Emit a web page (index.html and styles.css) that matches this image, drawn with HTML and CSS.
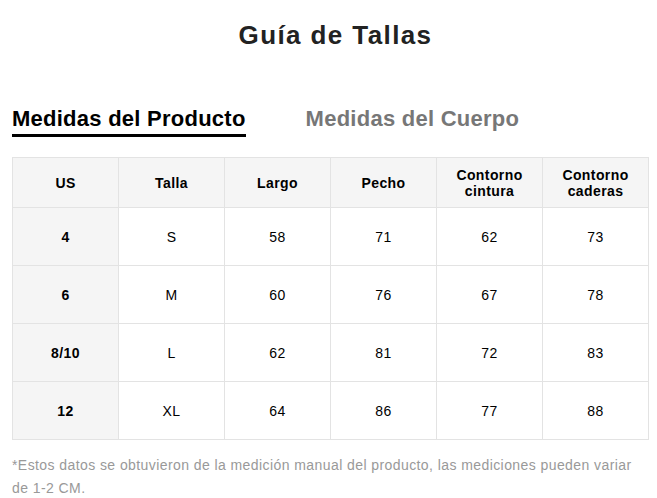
FILE: index.html
```html
<!DOCTYPE html>
<html lang="es">
<head>
<meta charset="utf-8">
<title>Guía de Tallas</title>
<link rel="stylesheet" href="styles.css">
</head>
<body>
<div class="page">
  <h1 class="title">Guía de Tallas</h1>
  <div class="tabs">
    <div class="tab active">Medidas del Producto</div>
    <div class="tab">Medidas del Cuerpo</div>
  </div>
  <table class="sizes">
    <thead>
      <tr>
        <th>US</th><th>Talla</th><th>Largo</th><th>Pecho</th><th>Contorno<br>cintura</th><th>Contorno<br>caderas</th>
      </tr>
    </thead>
    <tbody>
      <tr><th>4</th><td>S</td><td>58</td><td>71</td><td>62</td><td>73</td></tr>
      <tr><th>6</th><td>M</td><td>60</td><td>76</td><td>67</td><td>78</td></tr>
      <tr><th>8/10</th><td>L</td><td>62</td><td>81</td><td>72</td><td>83</td></tr>
      <tr><th>12</th><td>XL</td><td>64</td><td>86</td><td>77</td><td>88</td></tr>
    </tbody>
  </table>
  <p class="note">*Estos datos se obtuvieron de la medición manual del producto, las mediciones pueden variar de 1-2 CM.</p>
</div>
</body>
</html>
```
FILE: styles.css
```css
* { box-sizing: border-box; }
body {
  margin: 0;
  background: #fff;
  font-family: "Liberation Sans", Arial, sans-serif;
  color: #000;
}
.page {
  padding: 0 8px 0 12px;
}
.title {
  margin: 0;
  padding: 20px 0 0 10px;
  height: 62px;
  text-align: center;
  font-size: 26px;
  letter-spacing: 1.4px;
  font-weight: bold;
  color: #222;
  line-height: 30px;
}
.tabs {
  display: flex;
  gap: 60px;
  margin-top: 44px;
  height: 51px;
}
.tab {
  font-size: 22px;
  letter-spacing: 0.25px;
  font-weight: bold;
  color: #777;
  line-height: 26px;
  height: 31px;
}
.tab.active {
  color: #000;
  border-bottom: 3px solid #000;
}
.sizes {
  width: 637px;
  border-collapse: collapse;
  table-layout: fixed;
}
.sizes th, .sizes td {
  border: 1px solid #e3e3e3;
  text-align: center;
  font-size: 14px;
  letter-spacing: 0.4px;
  line-height: 16px;
  padding: 0;
}
.sizes thead th {
  height: 50px;
  background: #f5f5f5;
  font-weight: bold;
}
.sizes tbody th {
  background: #f5f5f5;
  font-weight: bold;
}
.sizes tbody td, .sizes tbody th {
  height: 58px;
}
.note {
  margin: 14px 0 0;
  font-size: 14px;
  letter-spacing: 0.42px;
  line-height: 23px;
  color: #999;
}
```
